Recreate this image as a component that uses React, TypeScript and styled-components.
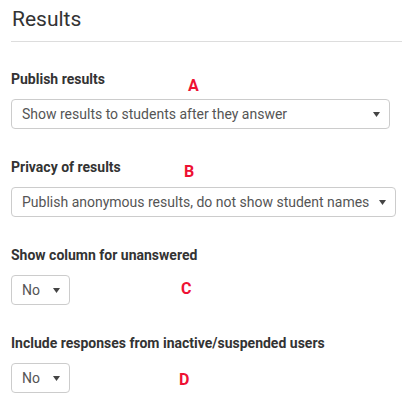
import React from "react";
import styled, { createGlobalStyle } from "styled-components";

const Global = createGlobalStyle`
  html, body { margin: 0; padding: 0; background: #fff; }
  body { font-family: Roboto, "Liberation Sans", Arial, sans-serif; color: #333; }
`;

const Page = styled.div`
  width: 402px;
  height: 411px;
  padding: 5px 0 0 11px;
  box-sizing: border-box;
  overflow: hidden;
`;

const Title = styled.h2`
  margin: 0;
  font-size: 21px;
  font-weight: 400;
  line-height: 28px;
  color: #333;
  padding-left: 1px;
  padding-bottom: 8px;
  border-bottom: 1px solid #ddd;
`;

const Fields = styled.div`
  display: flex;
  flex-direction: column;
  gap: 28px;
  padding-top: 27px;
`;

const Field = styled.div`
  position: relative;
  display: flex;
  flex-direction: column;
  gap: 10px;
`;

const Label = styled.label`
  font-size: 14px;
  font-weight: 700;
  line-height: 20px;
  color: #333;
`;

const Select = styled.div<{ $width?: number }>`
  display: flex;
  align-items: center;
  box-sizing: border-box;
  height: 30px;
  width: ${(p) => (p.$width ? `${p.$width}px` : "max-content")};
  padding: 0 9px 0 10px;
  border: 1px solid #ccc;
  border-radius: 4px;
  font-size: 14px;
  color: #555;
  gap: 10px;
  white-space: nowrap;
`;

const Value = styled.span`
  flex: 1;
`;

const Arrow = styled.svg`
  width: 7px;
  height: 5px;
  flex: none;
`;

const Marker = styled.span<{ $x: number; $y: number }>`
  position: absolute;
  left: ${(p) => p.$x}px;
  top: ${(p) => p.$y}px;
  font-size: 16px;
  font-weight: 700;
  color: #ee1133;
  line-height: 16px;
`;

const Caret = () => (
  <Arrow viewBox="0 0 7 5">
    <path d="M0 0 H7 L3.5 5 Z" fill="#444" />
  </Arrow>
);

const fields = [
  {
    label: "Publish results",
    value: "Show results to students after they answer",
    width: 379,
    marker: "A",
    mx: 177,
    my: 9,
  },
  {
    label: "Privacy of results",
    value: "Publish anonymous results, do not show student names",
    width: undefined,
    marker: "B",
    mx: 173,
    my: 7,
  },
  {
    label: "Show column for unanswered",
    value: "No",
    width: 59,
    marker: "C",
    mx: 170,
    my: 36,
  },
  {
    label: "Include responses from inactive/suspended users",
    value: "No",
    width: 59,
    marker: "D",
    mx: 168,
    my: 39,
  },
];

export default function App() {
  return (
    <>
      <Global />
      <Page>
        <Title>Results</Title>
        <Fields>
          {fields.map((f) => (
            <Field key={f.label}>
              <Label>{f.label}</Label>
              <Select $width={f.width}>
                <Value>{f.value}</Value>
                <Caret />
              </Select>
              <Marker $x={f.mx} $y={f.my}>
                {f.marker}
              </Marker>
            </Field>
          ))}
        </Fields>
      </Page>
    </>
  );
}
